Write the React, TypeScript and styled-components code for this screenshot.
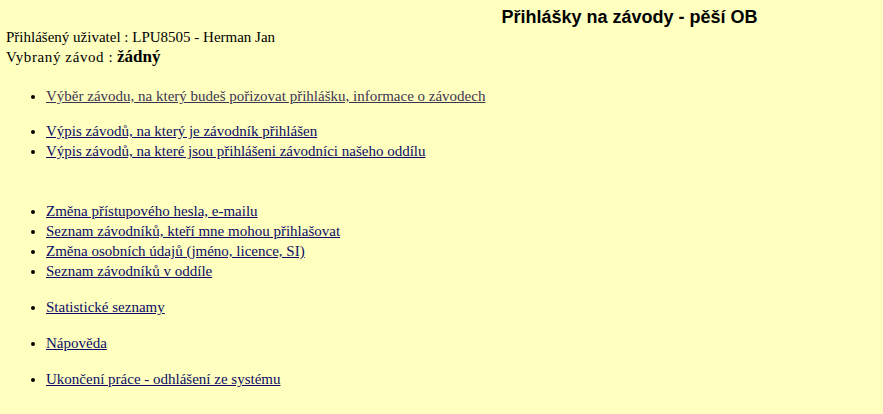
import React from 'react';
import styled, { createGlobalStyle } from 'styled-components';

const GlobalStyle = createGlobalStyle`
  html, body {
    margin: 0;
    background: #ffffc0;
  }
  body {
    padding: 8px 6px;
    font-family: "Liberation Serif", "Times New Roman", serif;
    font-size: 15px;
    color: #000;
  }
`

const Header = styled.div`
  display: grid;
  grid-template-columns: 376px 1fr;
`

const Title = styled.h1`
  grid-column: 2;
  margin: 0;
  text-align: center;
  font-family: "Liberation Sans", Arial, sans-serif;
  font-size: 18px;
  font-weight: bold;
  line-height: 19px;
`

const InfoLine = styled.div`
  line-height: 20px;
`

const Label = styled.span<{ spread?: number }>`
  letter-spacing: ${props => props.spread ?? 0}px;
`

const Selected = styled.b`
  font-size: 17px;
`

const Menu = styled.ul<{ gap: number }>`
  margin: ${props => props.gap}px 0 0 0;
  padding-left: 40px;
  list-style: disc;
`

const Item = styled.li`
  line-height: 20px;
  &::marker {
    font-size: 14px;
  }
`

const Link = styled.a<{ visited?: boolean }>`
  color: ${props => (props.visited ? '#3c3552' : '#0c0c66')};
  text-decoration: underline;
`

type Group = { gap: number, items: { text: string, visited?: boolean }[] }

const groups: Group[] = [
  { gap: 19, items: [{ text: 'Výběr závodu, na který budeš pořizovat přihlášku, informace o závodech', visited: true }] },
  {
    gap: 15, items: [
      { text: 'Výpis závodů, na který je závodník přihlášen' },
      { text: 'Výpis závodů, na které jsou přihlášeni závodníci našeho oddílu' },
    ]
  },
  {
    gap: 40, items: [
      { text: 'Změna přístupového hesla, e-mailu' },
      { text: 'Seznam závodníků, kteří mne mohou přihlašovat' },
      { text: 'Změna osobních údajů (jméno, licence, SI)' },
      { text: 'Seznam závodníků v oddíle' },
    ]
  },
  { gap: 16, items: [{ text: 'Statistické seznamy' }] },
  { gap: 16, items: [{ text: 'Nápověda' }] },
  { gap: 16, items: [{ text: 'Ukončení práce - odhlášení ze systému' }] },
]

export default function App() {
  return (
    <>
      <GlobalStyle />
      <Header>
        <Title>Přihlášky na závody - pěší OB</Title>
      </Header>
      <InfoLine>Přihlášený uživatel : LPU8505 - Herman Jan</InfoLine>
      <InfoLine><Label spread={0.6}>Vybraný závod :</Label> <Selected>žádný</Selected></InfoLine>
      {groups.map((g, i) => (
        <Menu key={i} gap={g.gap}>
          {g.items.map(it => (
            <Item key={it.text}>
              <Link href="#" visited={it.visited}>{it.text}</Link>
            </Item>
          ))}
        </Menu>
      ))}
    </>
  )
}
